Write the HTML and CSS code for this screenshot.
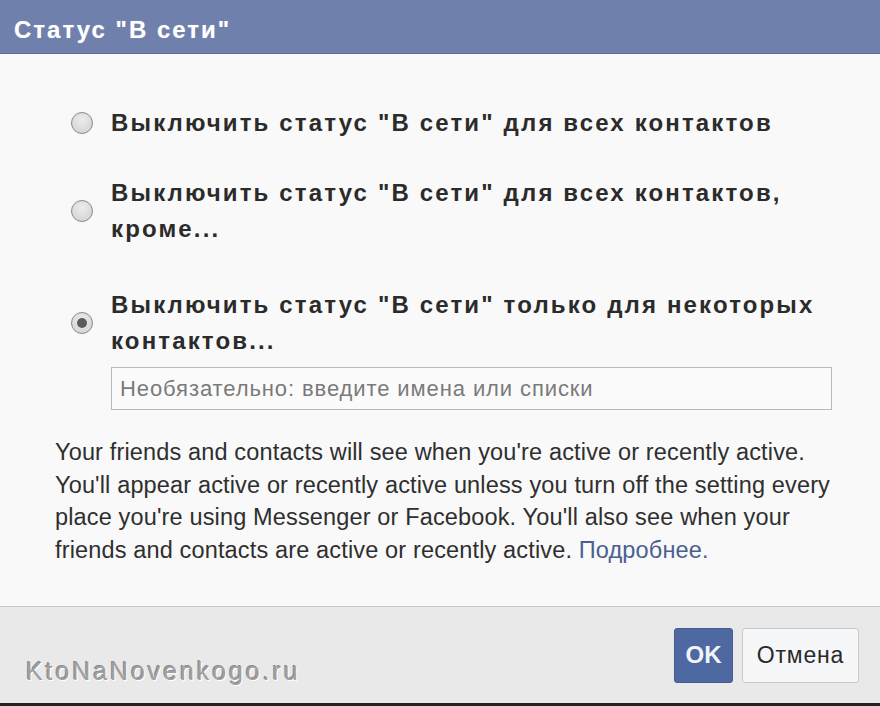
FILE: index.html
```html
<!DOCTYPE html>
<html>

<head>
  <meta charset="utf-8">
  <meta name="viewport" content="width=device-width">
  <title>Статус "В сети"</title>
  <link rel="stylesheet" href="styles.css">
</head>

<body>
  <div class="dialog">
    <div class="dialog-title">Статус "В сети"</div>

    <div class="dialog-body">
      <label class="option option-first">
        <span class="radio"></span>
        <span class="option-text">Выключить статус "В сети" для всех контактов</span>
      </label>

      <label class="option option-second">
        <span class="radio"></span>
        <span class="option-text">Выключить статус "В сети" для всех контактов,<br>кроме...</span>
      </label>

      <label class="option option-third">
        <span class="radio checked"></span>
        <span class="option-text">Выключить статус "В сети" только для некоторых<br>контактов...</span>
      </label>

      <div class="names-field">Необязательно: введите имена или списки</div>

      <p class="note">
        Your friends and contacts will see when you're active or recently active.<br>
        You'll appear active or recently active unless you turn off the setting every<br>
        place you're using Messenger or Facebook. You'll also see when your<br>
        friends and contacts are active or recently active. <a href="#">Подробнее.</a>
      </p>
    </div>

    <div class="dialog-footer">
      <div class="watermark">KtoNaNovenkogo.ru</div>
      <div class="buttons">
        <button class="btn btn-ok">OK</button>
        <button class="btn btn-cancel">Отмена</button>
      </div>
    </div>
  </div>
</body>
</html>
```

FILE: styles.css
```css
html {
  background-color: #f9f9f9;
}

body {
  font-family: "Liberation Sans", Arial, sans-serif;
  margin: 0;
  padding: 0;
  color: #333;
}

.dialog {
  width: 880px;
  height: 706px;
  display: flex;
  flex-direction: column;
  background-color: #f9f9f9;
}

.dialog-title {
  height: 54px;
  box-sizing: border-box;
  background-color: #7080ad;
  border-bottom: 1px solid #5d6c97;
  color: #fff;
  font-size: 24px;
  font-weight: bold;
  letter-spacing: 2px;
  padding: 16px 0 0 14px;
  text-shadow: 0 0 1px rgba(255, 255, 255, 0.4);
}

.dialog-body {
  flex: 1;
  padding: 0 48px 0 55px;
}

.option {
  display: flex;
  align-items: center;
  font-size: 24px;
  font-weight: bold;
  line-height: 36px;
  color: #2b2b2b;
}

.option-first {
  margin-top: 51px;
}

.option-second {
  margin-top: 34px;
}

.option-third {
  margin-top: 40px;
}

.radio {
  width: 20px;
  height: 20px;
  margin: 0 18px 0 16px;
  border: 1px solid #8a8a8a;
  border-radius: 50%;
  background: radial-gradient(circle at 50% 35%, #ececec, #cfcfcf);
  flex-shrink: 0;
  display: flex;
  align-items: center;
  justify-content: center;
}

.radio.checked::after {
  content: "";
  width: 10px;
  height: 10px;
  border-radius: 50%;
  background-color: #5b5b5b;
}

.option-text {
  letter-spacing: 2.15px;
  white-space: nowrap;
}

.names-field {
  margin: 8px 0 0 56px;
  height: 43px;
  box-sizing: border-box;
  border: 1px solid #b9b9b9;
  background-color: #fbfbfb;
  color: #7a7a7a;
  font-size: 22px;
  letter-spacing: 0.9px;
  line-height: 41px;
  padding-left: 8px;
}

.note {
  margin: 26px -10px 0 0;
  font-size: 23.5px;
  line-height: 32.5px;
  letter-spacing: 0.15px;
  color: #2f2f2f;
  white-space: nowrap;
}

.note a {
  color: #4a5f91;
  text-decoration: none;
}

.dialog-footer {
  height: 100px;
  box-sizing: border-box;
  border-top: 1px solid #c6c6c6;
  border-bottom: 3px solid #222;
  background-color: #e9e9e9;
  display: flex;
  align-items: center;
  justify-content: space-between;
  padding: 0 21px 0 26px;
}

.watermark {
  font-size: 25px;
  color: #a0a0a0;
  text-shadow: 1px 1px 0 #fff, -1px -1px 0 #8a8a8a;
  margin-top: 32px;
  letter-spacing: 2.9px;
}

.buttons {
  display: flex;
  gap: 9px;
}

.btn {
  font-family: "Liberation Sans", Arial, sans-serif;
  height: 55px;
  border-radius: 3px;
  cursor: pointer;
}

.btn-ok {
  width: 59px;
  background-color: #4e69a2;
  border: 1px solid #455d91;
  color: #f2f4f8;
  font-size: 24px;
  font-weight: bold;
}

.btn-cancel {
  width: 117px;
  background-color: #f6f7f9;
  border: 1px solid #c9c9c9;
  color: #2a2a2a;
  font-size: 23px;
  letter-spacing: 0.8px;
}
```
